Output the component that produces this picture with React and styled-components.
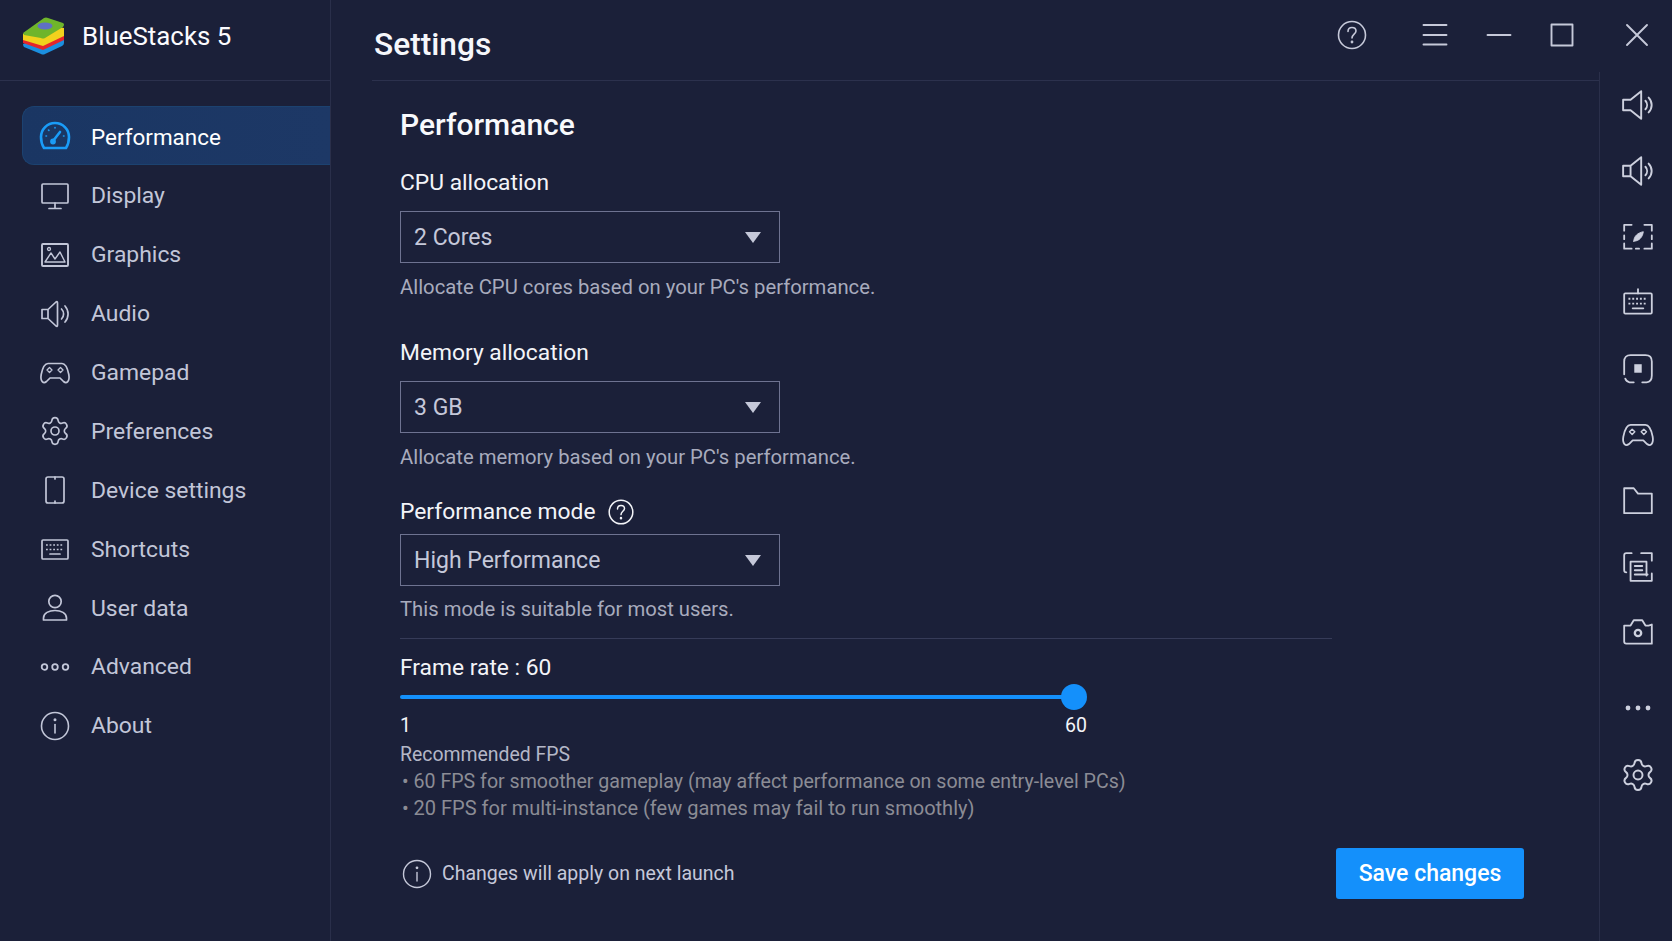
import React from "react";
import styled, { createGlobalStyle } from "styled-components";
import { Settings as GearIcon } from "lucide-react";

const Global = createGlobalStyle`
  html, body { margin: 0; padding: 0; background: #1b2039; }
  * { box-sizing: border-box; }
  body { font-family: Roboto, "Noto Sans", sans-serif; -webkit-font-smoothing: antialiased; }
`;

const Shell = styled.div`
  display: grid;
  grid-template-columns: 331px 1fr;
  width: 1672px;
  height: 941px;
  overflow: hidden;
  background: #1b2039;
  color: #fff;
`;

const Sidebar = styled.aside`
  display: flex;
  flex-direction: column;
  border-right: 1px solid #2a2f4a;
`;

const Brand = styled.div`
  display: flex;
  align-items: center;
  gap: 16px;
  height: 81px;
  padding: 0 0 9px 22px;
  border-bottom: 1px solid #2c314d;
`;

const BrandName = styled.span`
  font-size: 25.9px;
  font-weight: 400;
  color: #fbfbfe;
`;

const Nav = styled.nav`
  display: flex;
  flex-direction: column;
  padding: 25px 0 0 22px;
`;

const NavItem = styled.div`
  display: flex;
  align-items: center;
  gap: 20px;
  height: 58.9px;
  padding: 3px 0 0 16px;
  font-size: ${(p) => (p.$active ? 22.45 : 22.9)}px;
  color: ${(p) => (p.$active ? "#ffffff" : "#c2c6d8")};
  background: ${(p) => (p.$active ? "linear-gradient(90deg, #1a3663, #1d3866)" : "transparent")};
  border: 1px solid ${(p) => (p.$active ? "#1c4270" : "transparent")};
  border-right: 0;
  border-radius: 12px 0 0 12px;
  svg { flex: none; color: ${(p) => (p.$active ? "#1a9cf8" : "#c2c6d8")}; }
`;

const Main = styled.main`
  display: flex;
  flex-direction: column;
  min-width: 0;
`;

const TopBar = styled.header`
  display: flex;
  align-items: center;
  height: 80px;
  padding: 0 0 0 43px;
`;

const Title = styled.h1`
  margin: 8px auto 0 0;
  font-size: 31.7px;
  font-weight: 500;
  color: #f6f7fb;
`;

const WindowButton = styled.div`
  display: flex;
  align-items: center;
  justify-content: center;
  width: 32px;
  height: 32px;
  margin-right: ${(p) => p.$gap}px;
  margin-bottom: 10px;
  color: #c6c9d9;
`;

const HeaderRule = styled.div`
  height: 1px;
  margin: 0 73px 0 41px;
  background: #2c314d;
`;

const Body = styled.div`
  display: flex;
  flex: 1;
  min-height: 0;
`;

const Content = styled.section`
  flex: 1;
  padding: 29px 75px 0 69px;
`;

const Heading = styled.h2`
  margin: 0;
  font-size: 30px;
  line-height: 30px;
  font-weight: 500;
  color: #f8f9fc;
`;

const Label = styled.div`
  display: flex;
  align-items: center;
  gap: 12px;
  margin-top: ${(p) => p.$top}px;
  font-size: 22.8px;
  line-height: 28px;
  color: #f3f4f8;
`;

const SelectBox = styled.div`
  display: flex;
  align-items: center;
  justify-content: space-between;
  width: 380px;
  height: 52px;
  margin-top: ${(p) => p.$top}px;
  padding: 0 18px 0 13px;
  border: 1px solid #6e7391;
  font-size: 23px;
  color: #c5c8d9;
`;

const Caret = styled.span`
  width: 0;
  height: 0;
  border-left: 8px solid transparent;
  border-right: 8px solid transparent;
  border-top: 11px solid #c5c8d9;
`;

const Help = styled.p`
  margin: ${(p) => p.$top}px 0 0;
  font-size: 20.28px;
  line-height: 28px;
  color: #a8abbd;
`;

const Rule = styled.div`
  width: 932px;
  height: 1px;
  margin-top: 15px;
  background: #363b58;
`;

const Slider = styled.div`
  position: relative;
  width: 687px;
  height: 26px;
  margin-top: 2px;
`;

const Track = styled.div`
  position: absolute;
  top: 11px;
  left: 0;
  right: 13px;
  height: 4px;
  border-radius: 2px;
  background: #1490fb;
`;

const Thumb = styled.div`
  position: absolute;
  top: 0;
  right: 0;
  width: 26px;
  height: 26px;
  border-radius: 50%;
  background: #1490fb;
`;

const SliderLabels = styled.div`
  display: flex;
  justify-content: space-between;
  width: 687px;
  margin-top: 2px;
  font-size: 19.5px;
  line-height: 28px;
  color: #f3f4f8;
`;

const Note = styled.div`
  display: flex;
  margin-top: ${(p) => p.$top || 0}px;
  font-size: ${(p) => p.$size}px;
  line-height: 27px;
  color: ${(p) => (p.$dim ? "#8b8c95" : "#b4b7c7")};
`;

const Bullet = styled.span`
  width: 13.5px;
  padding-left: 2px;
  flex: none;
`;

const Footer = styled.div`
  display: flex;
  align-items: center;
  justify-content: space-between;
  margin-top: 26px;
`;

const ApplyNote = styled.div`
  display: flex;
  align-items: center;
  gap: 9px;
  padding-left: 1px;
  font-size: 19.5px;
  color: #c5c8d9;
`;

const SaveButton = styled.button`
  width: 188px;
  height: 51px;
  border: 0;
  border-radius: 3px;
  background: #1490fb;
  color: #fff;
  font-family: inherit;
  font-size: 23px;
  font-weight: 500;
`;

const Rail = styled.aside`
  display: flex;
  flex-direction: column;
  flex: none;
  width: 73px;
  margin-top: -9px;
  padding-left: 4px;
  border-left: 1px solid #2a2f4a;
`;

const RailItem = styled.div`
  display: flex;
  align-items: center;
  justify-content: center;
  height: 66px;
  margin-top: ${(p) => p.$top || 0}px;
  color: #cdd0de;
`;

const Svg = ({ size = 32, sw = 1.7, children, fill = "none" }) => (
  <svg width={size} height={size} viewBox="0 0 32 32" fill={fill} stroke="currentColor" strokeWidth={sw} strokeLinecap="round" strokeLinejoin="round">
    {children}
  </svg>
);

const Logo = () => (
  <svg width="44" height="40" viewBox="0 0 44 40">
    <path d="M1 28 L24 18 L42 24 V27 Q42 29 40 30 L23 38 Q21 39 19 38 L2 31 Q1 30 1 28Z" fill="#1b8fe0" />
    <path d="M1 24 L24 14 L42 20 V24 L21 34 L1 27Z" fill="#e5262b" />
    <path d="M1 18 L24 8 L42 12 V20 L21 30 L1 24Z" fill="#f1d21d" />
    <path d="M1 17 L22 2 Q24 1 26 2 L41 7 Q43 8 41 11 L23 22 Q21 23 19 22 L2 19Z" fill="#6fb52b" />
    <ellipse cx="23" cy="10" rx="7.5" ry="3.4" fill="#5f70c4" />
  </svg>
);

const Gauge = () => (
  <Svg sw={2.6}>
    <path d="M5 27 H27 C29 24 30 20 30 16 A14 14 0 0 0 2 16 C2 20 3 24 5 27Z" />
    <path d="M14 20 L21 11" />
    <circle cx="14" cy="20.5" r="1.6" fill="currentColor" />
    <g strokeWidth="1.6">
      <path d="M16 6.5 v.5 M9.5 9 l.4 .4 M7 15 h.5 M25 15 h-.5" />
    </g>
  </Svg>
);
const Monitor = () => (
  <Svg>
    <rect x="3" y="4" width="26" height="19" rx="1" />
    <path d="M16 23 V28 M10 28.5 H22" />
  </Svg>
);
const Picture = () => (
  <Svg sw={1.9}>
    <rect x="3" y="5" width="26" height="22" rx="1" />
    <path d="M6 23 L12 14 L16 20 L21 13 L26 23 Z" strokeWidth="1.4" />
    <circle cx="10" cy="10" r="1.5" strokeWidth="1.3" />
  </Svg>
);
const Speaker = ({ size = 32, sw }) => (
  <Svg size={size} sw={sw}>
    <path d="M3 11.5 H9 L17 4 Q18.5 3 18.5 5 V27 Q18.5 29 17 28 L9 20.5 H3 Z M9 11.5 V20.5" />
    <path d="M22.5 11 A7 7 0 0 1 22.5 21 M26 8 A12 12 0 0 1 26 24" />
  </Svg>
);
const SpeakerBare = () => (
  <Svg size={34} sw={1.8}>
    <path d="M2 11 H9 L19 3 V29 L9 21 H2 Z" />
    <path d="M23 12 A6 6 0 0 1 23 20 M26 9 A10 10 0 0 1 26 23" />
  </Svg>
);
const SpeakerSmall = () => (
  <Svg size={34} sw={1.8}>
    <path d="M2 11 H9 L19 3 V29 L9 21 H2 Z M9 11 V21" />
    <path d="M23 12 A6 6 0 0 1 23 20 M26 9 A10 10 0 0 1 26 23" />
  </Svg>
);
const Gamepad = ({ size = 32 }) => (
  <Svg size={size}>
    <path d="M9 6.5 H23 C26.5 6.5 28.5 11 29.8 17.5 C31 24.5 27.5 27 24.5 24.5 L21 21 H11 L7.5 24.5 C4.5 27 1 24.5 2.2 17.5 C3.5 11 5.5 6.5 9 6.5Z" />
    <path d="M10.5 10.5 L13 13 L10.5 15.5 L8 13Z M21.5 10.5 L24 13 L21.5 15.5 L19 13Z" strokeWidth="1.3" />
  </Svg>
);
const Device = () => (
  <Svg>
    <rect x="7" y="3" width="18" height="26" rx="2" />
    <path d="M16 3 V5 M16 27 V29" />
  </Svg>
);
const Keyboard = ({ stem, size = 32 }) => (
  <Svg size={size}>
    <rect x="3" y="7" width="26" height="19" rx="1" />
    <path d="M7 12 H25 M7 16.5 H25" strokeDasharray="1.8 1.8" strokeLinecap="butt" />
    <path d="M11 21 H21" />
    {stem && <path d="M16 3 V7" />}
  </Svg>
);
const User = () => (
  <Svg>
    <circle cx="16" cy="9.5" r="6.2" />
    <path d="M4.5 28 V26 C4.5 21 10 18.5 16 18.5 S27.5 21 27.5 26 V28 Z" />
  </Svg>
);
const Rings = () => (
  <Svg sw={1.8}>
    <circle cx="5.5" cy="16" r="2.8" />
    <circle cx="16" cy="16" r="2.8" />
    <circle cx="26.5" cy="16" r="2.8" />
  </Svg>
);
const Info = ({ size = 32, sw = 1.6 }) => (
  <Svg size={size} sw={sw}>
    <circle cx="16" cy="16" r="13.5" />
    <path d="M16 14.5 V23" />
    <circle cx="16" cy="9.8" r="0.7" fill="currentColor" />
  </Svg>
);
const Question = ({ size = 32, sw = 1.6 }) => (
  <Svg size={size} sw={sw}>
    <circle cx="16" cy="16" r="13.5" />
    <path d="M12 12.5 C12 9.5 14 8.5 16 8.5 C18.5 8.5 20 10 20 12 C20 15 16 15.5 16 19" />
    <circle cx="16" cy="23" r="0.6" fill="currentColor" />
  </Svg>
);
const Hamburger = () => (
  <Svg sw={1.9}>
    <path d="M4.5 6 H27.5 M4.5 16 H27.5 M4.5 25.5 H27.5" />
  </Svg>
);
const Minimize = () => (
  <Svg sw={1.9}>
    <path d="M4.5 16 H27.5" />
  </Svg>
);
const Maximize = () => (
  <Svg sw={1.9}>
    <rect x="5.5" y="5.5" width="21" height="21" />
  </Svg>
);
const Close = () => (
  <Svg sw={1.9}>
    <path d="M6 6 L26 26 M26 6 L6 26" />
  </Svg>
);
const Capture = () => (
  <Svg size={34}>
    <path d="M3 10 V4.5 H10 M22 4.5 H29 V10 M3 14.5 V18 M29 14.5 V18 M3 22 V27 H10 M22 27 H29 V22 M14 27 H17" />
    <path d="M12 20 C12 15 16 12 21 11 C20.5 16 17 20 12 20Z" fill="currentColor" strokeWidth="0.8" />
  </Svg>
);
const Rotate = () => (
  <Svg size={34}>
    <path d="M3 21 V9 Q3 3 9 3 H23 Q29 3 29 9 V22 Q29 28 24 28.5 H20 M12 28.5 H8 Q5 28 4 25" />
    <rect x="12.5" y="11.5" width="7" height="8" fill="currentColor" stroke="none" />
  </Svg>
);
const Folder = () => (
  <Svg size={34}>
    <path d="M3 4 H12 L16 9 H29 V27.5 H3 Z" />
  </Svg>
);
const CardScan = () => (
  <Svg size={34}>
    <path d="M10 3 H5 Q3 3 3 5 V19 Q3 21 5 21 M19 3 H29 V10 M29 22 V29 H9 V11 H24 V24" />
    <path d="M13 15 H20 M13 19 H20 M13 23 H25" strokeWidth="1.8" />
  </Svg>
);
const Camera = () => (
  <Svg size={34}>
    <path d="M3 9 H9 L12 4 H20 L23 9 H26 L29 8 V26 H5 Q3 26 3 24 Z" />
    <circle cx="16" cy="16" r="3" strokeWidth="2.2" />
  </Svg>
);
const Dots = () => (
  <Svg>
    <circle cx="6" cy="16" r="2.4" fill="currentColor" stroke="none" />
    <circle cx="16" cy="16" r="2.4" fill="currentColor" stroke="none" />
    <circle cx="26" cy="16" r="2.4" fill="currentColor" stroke="none" />
  </Svg>
);

const navItems = [
  ["Performance", <Gauge />],
  ["Display", <Monitor />],
  ["Graphics", <Picture />],
  ["Audio", <Speaker />],
  ["Gamepad", <Gamepad />],
  ["Preferences", <GearIcon size={32} strokeWidth={1.25} />],
  ["Device settings", <Device />],
  ["Shortcuts", <Keyboard />],
  ["User data", <User />],
  ["Advanced", <Rings />],
  ["About", <Info />],
];

const railItems = [
  [<SpeakerBare />, 0],
  [<SpeakerSmall />, 0],
  [<Capture />, 0],
  [<Keyboard stem size={34} />, 0],
  [<Rotate />, 0],
  [<Gamepad size={34} />, 0],
  [<Folder />, 0],
  [<CardScan />, 0],
  [<Camera />, 0],
  [<Dots />, 9],
  [<GearIcon size={36} strokeWidth={1.3} />, 1],
];

export default function App() {
  return (
    <Shell>
      <Global />
      <Sidebar>
        <Brand>
          <Logo />
          <BrandName>BlueStacks 5</BrandName>
        </Brand>
        <Nav>
          {navItems.map(([name, icon], i) => (
            <NavItem key={name} $active={i === 0}>
              {icon}
              {name}
            </NavItem>
          ))}
        </Nav>
      </Sidebar>
      <Main>
        <TopBar>
          <Title>Settings</Title>
          <WindowButton $gap={51}><Question /></WindowButton>
          <WindowButton $gap={32}><Hamburger /></WindowButton>
          <WindowButton $gap={31}><Minimize /></WindowButton>
          <WindowButton $gap={43}><Maximize /></WindowButton>
          <WindowButton $gap={19}><Close /></WindowButton>
        </TopBar>
        <HeaderRule />
        <Body>
          <Content>
            <Heading>Performance</Heading>
            <Label $top={29}>CPU allocation</Label>
            <SelectBox $top={14}>2 Cores<Caret /></SelectBox>
            <Help $top={10}>Allocate CPU cores based on your PC's performance.</Help>
            <Label $top={38}>Memory allocation</Label>
            <SelectBox $top={14}>3 GB<Caret /></SelectBox>
            <Help $top={10}>Allocate memory based on your PC's performance.</Help>
            <Label $top={27}>Performance mode <Question size={28} sw={1.7} /></Label>
            <SelectBox $top={8}>High Performance<Caret /></SelectBox>
            <Help $top={9}>This mode is suitable for most users.</Help>
            <Rule />
            <Label $top={15}>Frame rate : 60</Label>
            <Slider>
              <Track />
              <Thumb />
            </Slider>
            <SliderLabels>
              <span>1</span>
              <span>60</span>
            </SliderLabels>
            <Note $top={1} $size={19.43}>Recommended FPS</Note>
            <Note $dim $size={19.6}><Bullet>•</Bullet>60 FPS for smoother gameplay (may affect performance on some entry-level PCs)</Note>
            <Note $dim $size={20.05}><Bullet>•</Bullet>20 FPS for multi-instance (few games may fail to run smoothly)</Note>
            <Footer>
              <ApplyNote><Info size={32} sw={1.4} />Changes will apply on next launch</ApplyNote>
              <SaveButton>Save changes</SaveButton>
            </Footer>
          </Content>
          <Rail>
            {railItems.map(([icon, top], i) => (
              <RailItem key={i} $top={top}>{icon}</RailItem>
            ))}
          </Rail>
        </Body>
      </Main>
    </Shell>
  );
}
